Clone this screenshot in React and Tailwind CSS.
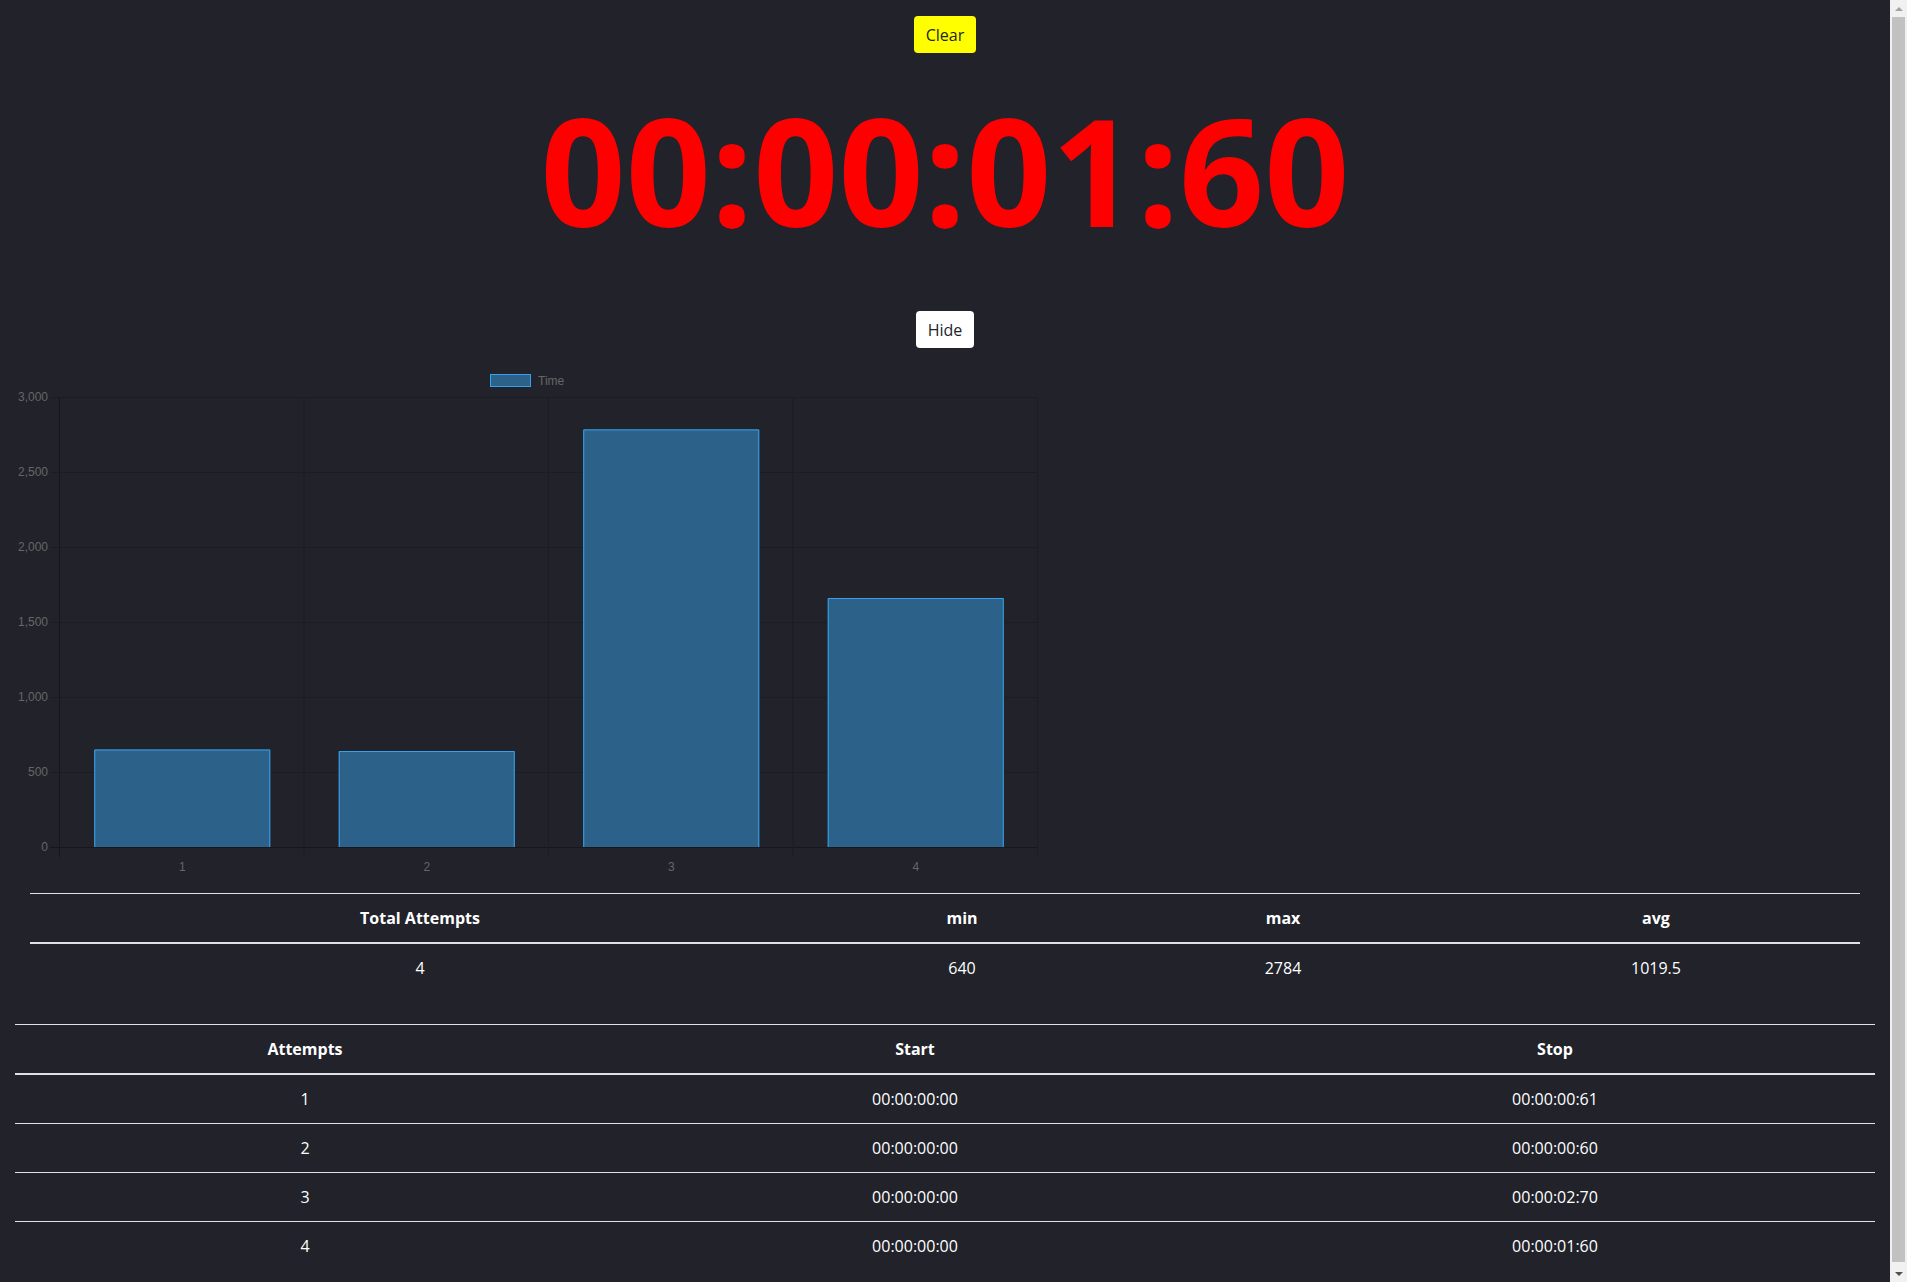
import React from 'react'

const ATTEMPTS = [
  { n: 1, start: '00:00:00:00', stop: '00:00:00:61', ms: 650 },
  { n: 2, start: '00:00:00:00', stop: '00:00:00:60', ms: 640 },
  { n: 3, start: '00:00:00:00', stop: '00:00:02:70', ms: 2784 },
  { n: 4, start: '00:00:00:00', stop: '00:00:01:60', ms: 1660 },
]

// chart geometry (svg coords)
const TOP = 41
const ZERO = 491
const LEFT = 60
const COL = 244.5
const Y_TICKS = [3000, 2500, 2000, 1500, 1000, 500, 0]

function TimeChart() {
  const yOf = v => ZERO - (v / 3000) * (ZERO - TOP)
  return (
    <svg width="1053" height="537" className="block" style={{ fontFamily: '"Liberation Sans", Arial, sans-serif' }}>
      {/* legend */}
      <rect x="490.5" y="18.5" width="40" height="12" fill="#2c628a" stroke="#36a2eb" strokeWidth="1" />
      <text x="538" y="29" fontSize="12" fill="#666">Time</text>

      {/* horizontal grid */}
      {Y_TICKS.map(v => (
        <g key={v}>
          <line x1="50" x2={LEFT + COL * 4} y1={yOf(v) + 0.5} y2={yOf(v) + 0.5} stroke={v === 0 ? '#16171c' : '#1c1d23'} />
          <text x="48" y={yOf(v) + 4} fontSize="12" fill="#666" textAnchor="end">{v.toLocaleString('en-US')}</text>
        </g>
      ))}
      {/* vertical grid */}
      {[0, 1, 2, 3, 4].map(i => (
        <line key={i} x1={LEFT + COL * i - 0.5} x2={LEFT + COL * i - 0.5} y1={TOP} y2={ZERO + 10} stroke={i === 0 ? '#16171c' : '#1c1d23'} />
      ))}

      {/* bars */}
      {ATTEMPTS.map((a, i) => {
        const cx = LEFT + COL * i + COL / 2
        const w = COL * 0.72
        const y = yOf(a.ms)
        return (
          <g key={a.n}>
            <rect x={cx - w / 2} y={y} width={w} height={ZERO - y} fill="#2c628a" />
            <path d={`M${cx - w / 2 + 0.5} ${ZERO} V${y + 0.5} H${cx + w / 2 - 0.5} V${ZERO}`} fill="none" stroke="#36a2eb" strokeWidth="1" />
            <text x={cx} y={ZERO + 24} fontSize="12" fill="#666" textAnchor="middle">{a.n}</text>
          </g>
        )
      })}
    </svg>
  )
}

function Scrollbar() {
  return (
    <div className="w-[17px] h-screen bg-[#f1f1f1] flex flex-col items-center shrink-0">
      <div className="h-[17px] flex items-center justify-center">
        <div className="w-0 h-0 border-x-[4px] border-x-transparent border-b-[4px] border-b-[#a3a3a3]" />
      </div>
      <div className="w-[13px] flex-1 bg-[#c1c1c1] mb-[3px]" />
      <div className="h-[17px] flex items-center justify-center">
        <div className="w-0 h-0 border-x-[4px] border-x-transparent border-t-[4px] border-t-[#505050]" />
      </div>
    </div>
  )
}

export default function App() {
  return (
    <div className="flex h-screen overflow-hidden bg-[#21222a]">
      <div className="w-[1890px] shrink-0 text-white font-['Open_Sans',sans-serif] pb-4">
        <div className="flex justify-center pt-4">
          <button className="h-[37px] px-3 rounded bg-[#ffff00] text-[#212529] text-base">Clear</button>
        </div>

        <div className="mt-[42px] text-center text-[149px] leading-none font-bold text-[#ff0000]">00:00:01:60</div>

        <div className="mt-[67px] flex justify-center">
          <button className="h-[37px] px-3 rounded bg-white text-[#212529] text-base">Hide</button>
        </div>

        <div className="mt-2">
          <TimeChart />
        </div>

        {/* summary */}
        <table className="mx-[30px] w-[1830px] border-collapse text-center text-base">
          <colgroup>
            <col className="w-[780px]" />
            <col className="w-[304px]" />
            <col className="w-[338px]" />
            <col />
          </colgroup>
          <thead>
            <tr>
              {['Total Attempts', 'min', 'max', 'avg'].map(h => (
                <th key={h} className="p-3 leading-6 font-bold border-t border-[#dee2e6] border-b-2">{h}</th>
              ))}
            </tr>
          </thead>
          <tbody>
            <tr>
              {['4', '640', '2784', '1019.5'].map((v, i) => (
                <td key={i} className="p-3 leading-6">{v}</td>
              ))}
            </tr>
          </tbody>
        </table>

        {/* attempts */}
        <table className="mt-8 mx-[15px] w-[1860px] border-collapse text-center text-base">
          <colgroup>
            <col className="w-[580px]" />
            <col className="w-[640px]" />
            <col />
          </colgroup>
          <thead>
            <tr>
              {['Attempts', 'Start', 'Stop'].map(h => (
                <th key={h} className="p-3 leading-6 font-bold border-t border-[#dee2e6] border-b-2">{h}</th>
              ))}
            </tr>
          </thead>
          <tbody>
            {ATTEMPTS.map((a, i) => (
              <tr key={a.n} className={i > 0 ? 'border-t border-[#dee2e6]' : ''}>
                <td className="p-3 leading-6">{a.n}</td>
                <td className="p-3 leading-6">{a.start}</td>
                <td className="p-3 leading-6">{a.stop}</td>
              </tr>
            ))}
          </tbody>
        </table>
      </div>
      <Scrollbar />
    </div>
  )
}
